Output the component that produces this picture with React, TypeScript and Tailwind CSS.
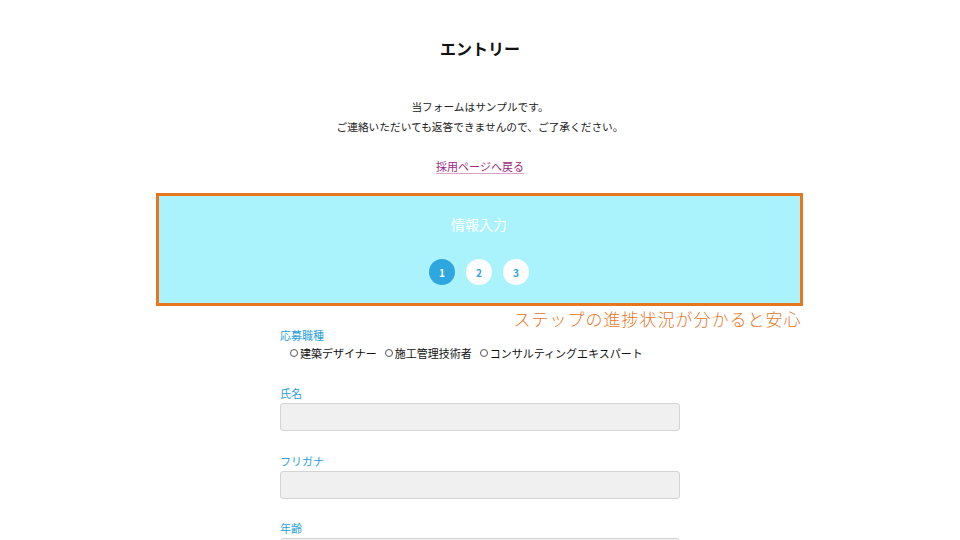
import React from "react";

export default function App() {
  const font = { fontFamily: '"Noto Sans CJK JP", "Noto Sans", sans-serif' };
  return (
    <div className="min-h-[540px] w-full bg-white text-[#222]" style={font}>
      <div className="flex flex-col items-center pt-[38px]">
        <h1 className="text-[16px] font-bold leading-[20px] text-[#111]">エントリー</h1>
        <div className="mt-[39px] flex flex-col items-center text-[10.7px] leading-[20px] text-[#222]">
          <p>当フォームはサンプルです。</p>
          <p>ご連絡いただいても返答できませんので、ご了承ください。</p>
        </div>
        <a href="#" className="mt-[19px] text-[11px] leading-[20px] text-[#9b2a7e] underline underline-offset-2 decoration-[#d9a0c9]">
          採用ページへ戻る
        </a>
        <div className="relative mt-[17px] w-[647px] -translate-x-[1px]">
          <div className="flex h-[113px] flex-col items-center border-[3px] border-[#e8761f] bg-[#aaf3fc]">
            <div className="mt-[18px] text-[14px] leading-[20px] text-white">情報入力</div>
            <div className="mt-[25px] flex gap-[11px]">
              <div className="flex h-[26px] w-[26px] items-center justify-center rounded-full bg-[#2ea6df] text-[10px] font-bold text-white">1</div>
              <div className="flex h-[26px] w-[26px] items-center justify-center rounded-full bg-white text-[10px] font-bold text-[#2ea6df]">2</div>
              <div className="flex h-[26px] w-[26px] items-center justify-center rounded-full bg-white text-[10px] font-bold text-[#2ea6df]">3</div>
            </div>
          </div>
          <div className="absolute right-[1px] top-[112px] text-[17px] font-light leading-[28px] tracking-[1px] text-[#e8761f]">
            ステップの進捗状況が分かると安心
          </div>
        </div>
        <div className="mt-[19px] flex w-[400px] flex-col text-[11px]">
          <div className="leading-[20px] text-[#2a9fd8]">応募職種</div>
          <div className="flex gap-[8px] pl-[10px] leading-[16px] text-[#111]">
            <label className="flex items-center gap-[2px]"><span className="inline-block h-[8px] w-[8px] rounded-full border border-[#555]"></span>建築デザイナー</label>
            <label className="flex items-center gap-[2px]"><span className="inline-block h-[8px] w-[8px] rounded-full border border-[#555]"></span>施工管理技術者</label>
            <label className="flex items-center gap-[2px]"><span className="inline-block h-[8px] w-[8px] rounded-full border border-[#555]"></span>コンサルティングエキスパート</label>
          </div>
          <div className="mt-[22px] leading-[20px] text-[#2a9fd8]">氏名</div>
          <div className="h-[28px] w-full rounded-[3px] border border-[#d4d4d4] bg-[#f0f0f0]"></div>
          <div className="mt-[20px] leading-[20px] text-[#2a9fd8]">フリガナ</div>
          <div className="h-[28px] w-full rounded-[3px] border border-[#d4d4d4] bg-[#f0f0f0]"></div>
          <div className="mt-[19px] leading-[20px] text-[#2a9fd8]">年齢</div>
          <div className="h-[28px] w-full rounded-[3px] border border-[#d4d4d4] bg-[#f0f0f0]"></div>
        </div>
      </div>
    </div>
  );
}
